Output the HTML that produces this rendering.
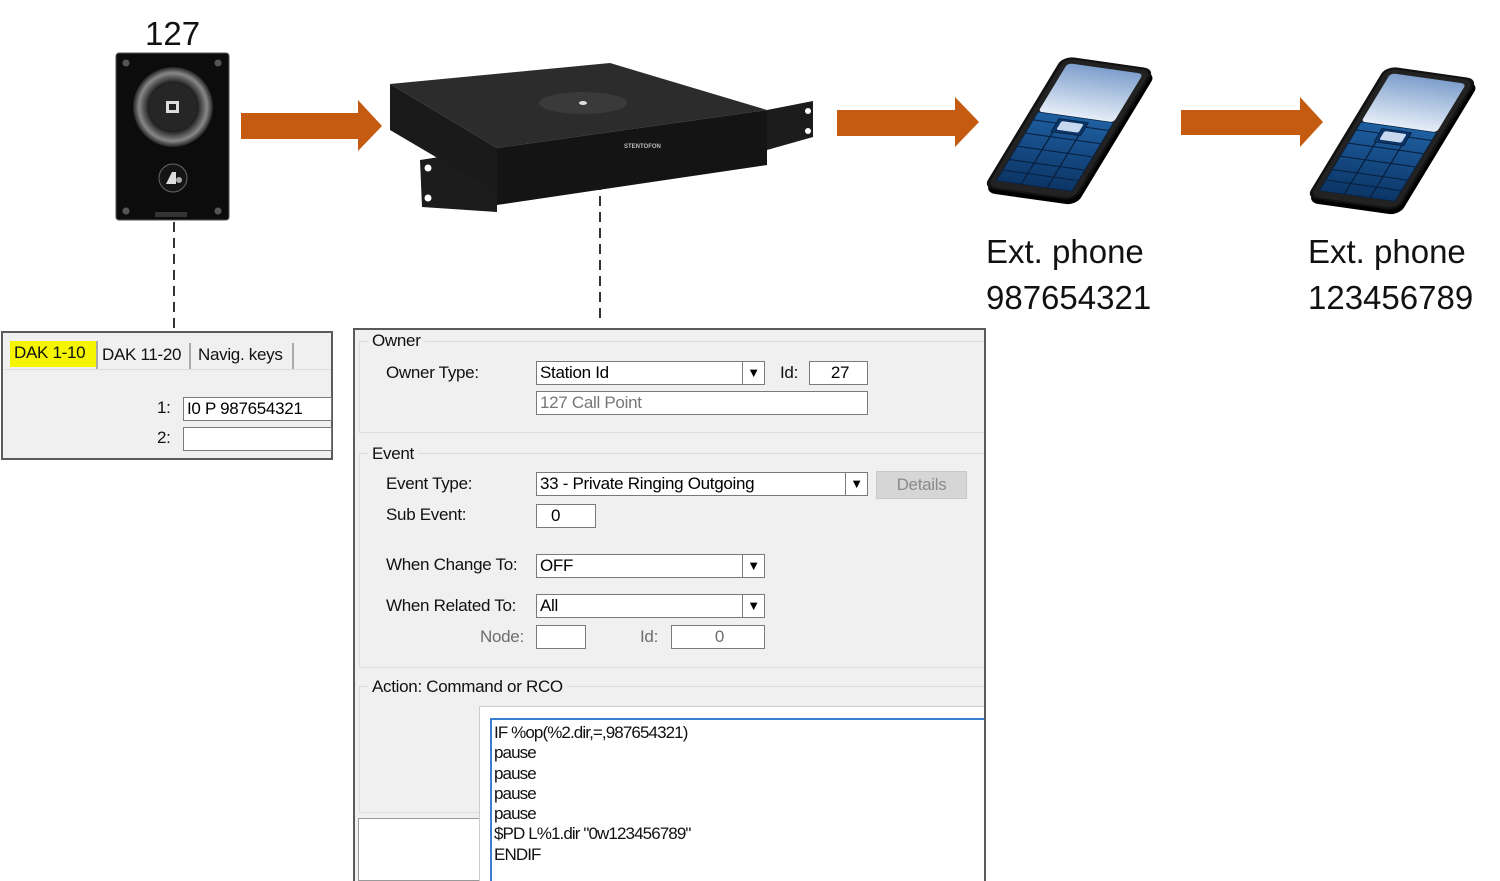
<!DOCTYPE html>
<html><head><meta charset="utf-8"><style>
*{margin:0;padding:0;box-sizing:border-box}
body{width:1500px;height:881px;background:#fff;position:relative;overflow:hidden;font-family:"Liberation Sans",sans-serif}
.a{position:absolute}
.ui{font-family:"Liberation Sans Narrow","Liberation Sans",sans-serif;font-size:17px;color:#111;white-space:nowrap;letter-spacing:-0.3px}
.inp{position:absolute;background:#fff;border:1px solid #7a7a7a;height:24px;font-size:17px;line-height:22px;padding-left:3px;white-space:nowrap;font-family:"Liberation Sans Narrow","Liberation Sans",sans-serif;letter-spacing:-0.3px}
.dd{position:absolute;right:0;top:0;width:22px;height:22px;border-left:1px solid #7a7a7a;text-align:center;font-size:13px;line-height:22px}
.grp{position:absolute;border:1px solid #dcdcdc;border-right:none}
.big{font-family:"Liberation Sans",sans-serif;font-size:33px;color:#111;line-height:1}
</style></head><body>

<div class="a big" style="left:145px;top:17px;font-size:33px">127</div>

<svg class="a" style="left:0;top:0" width="1500" height="330">
  <defs>
    <radialGradient id="sp" cx="50%" cy="50%" r="50%">
      <stop offset="0" stop-color="#333"/><stop offset="0.6" stop-color="#1a1a1a"/><stop offset="0.85" stop-color="#888"/><stop offset="1" stop-color="#222"/>
    </radialGradient>
    <linearGradient id="scr" x1="0" y1="0" x2="0" y2="1"><stop offset="0" stop-color="#7e9fcc"/><stop offset="1" stop-color="#e6eef8"/></linearGradient>
    <linearGradient id="kp" x1="0" y1="0" x2="0" y2="1"><stop offset="0" stop-color="#1f5fa0"/><stop offset="1" stop-color="#0b3566"/></linearGradient>
    <g id="phone">
      <rect x="4" y="6" width="100" height="200" rx="12" fill="#000"/>
      <rect x="0" y="0" width="100" height="200" rx="12" fill="#111"/>
      <rect x="3" y="3" width="94" height="194" rx="10" fill="#222"/>
      <rect x="9" y="9" width="82" height="74" rx="5" fill="url(#scr)"/>
      <rect x="9" y="83" width="82" height="104" fill="url(#kp)" stroke="#08203f"/>
      <g stroke="#08203f" stroke-width="1.5">
        <line x1="9" y1="95" x2="91" y2="95"/><line x1="9" y1="115" x2="91" y2="115"/><line x1="9" y1="135" x2="91" y2="135"/><line x1="9" y1="155" x2="91" y2="155"/><line x1="9" y1="171" x2="91" y2="171"/>
        <line x1="36" y1="95" x2="36" y2="187"/><line x1="64" y1="95" x2="64" y2="187"/>
      </g>
      <rect x="34" y="88" width="32" height="20" fill="#0b3566" stroke="#08203f"/>
      <rect x="38" y="91" width="24" height="13" rx="2" fill="#c8d8ee"/>
    </g>
  </defs>

  <rect x="116" y="53" width="113" height="167" rx="3" fill="#0c0c0c" stroke="#555"/>
  <circle cx="126" cy="63" r="3.5" fill="#555"/><circle cx="218" cy="63" r="3.5" fill="#555"/>
  <circle cx="126" cy="211" r="3.5" fill="#555"/><circle cx="218" cy="211" r="3.5" fill="#555"/>
  <circle cx="173" cy="107" r="40" fill="url(#sp)"/>
  <circle cx="173" cy="107" r="24" fill="#262626"/>
  <rect x="166" y="101" width="13" height="12" fill="#ddd"/><rect x="169" y="104" width="7" height="6" fill="#222"/>
  <circle cx="173" cy="178" r="14" fill="#151515" stroke="#666"/>
  <path d="M166 184 L172 172 L176 172 L176 184 Z" fill="#ddd"/><circle cx="179" cy="180" r="3" fill="#aaa"/>
  <rect x="155" y="212" width="32" height="5" fill="#333"/>

  <line x1="174" y1="222" x2="174" y2="331" stroke="#333" stroke-width="2" stroke-dasharray="10,6"/>
  <line x1="600" y1="180" x2="600" y2="322" stroke="#333" stroke-width="2" stroke-dasharray="10,6"/>

  <polygon points="241,113 358,113 358,100 382,126 358,151 358,139 241,139" fill="#c55a11"/>
  <polygon points="837,110 955,110 955,97 979,122 955,147 955,136 837,136" fill="#c55a11"/>
  <polygon points="1181,110 1300,110 1300,97 1323,122 1300,147 1300,135 1181,135" fill="#c55a11"/>

  <polygon points="420,160 497,148 497,212 422,207" fill="#1c1c1c"/>
  <circle cx="428" cy="168" r="3.5" fill="#fff"/><circle cx="428" cy="198" r="3.5" fill="#fff"/>
  <polygon points="390,84 610,63 767,110 497,148" fill="#2c2c2c"/>
  <polygon points="390,84 497,148 497,193 390,130" fill="#1a1a1a"/>
  <polygon points="497,148 767,110 767,165 497,205" fill="#141414"/>
  <polygon points="767,110 813,101 813,137 767,150" fill="#1c1c1c"/>
  <circle cx="808" cy="111" r="3" fill="#fff"/><circle cx="808" cy="131" r="3" fill="#fff"/>
  <ellipse cx="583" cy="103" rx="44" ry="11" fill="#3a3a3a"/>
  <ellipse cx="583" cy="103" rx="4" ry="2" fill="#ddd"/>
  <text x="624" y="148" font-size="6" fill="#bbb" font-family="Liberation Sans" font-weight="bold">STENTOFON</text>

  <g transform="matrix(0.92,0.13,-0.4,0.66,1063,56)"><use href="#phone"/></g>
  <g transform="matrix(0.92,0.13,-0.4,0.66,1386,66)"><use href="#phone"/></g>
</svg>

<div class="a big" style="left:986px;top:235px">Ext. phone</div>
<div class="a big" style="left:986px;top:281px">987654321</div>
<div class="a big" style="left:1308px;top:235px">Ext. phone</div>
<div class="a big" style="left:1308px;top:281px">123456789</div>

<div class="a" style="left:1px;top:331px;width:332px;height:129px;background:#f0f0f0;border:2px solid #5a5a5a;border-right:none"></div>
<div class="a" style="left:331px;top:331px;width:2px;height:129px;background:#5a5a5a"></div>
<div class="a" style="left:5px;top:369px;width:326px;height:1px;background:#dcdcdc"></div>
<div class="a ui" style="left:10px;top:341px;width:86px;height:26px;background:#f5f500;padding:2px 0 0 4px;font-size:17px">DAK 1-10</div>
<div class="a" style="left:96px;top:341px;width:2px;height:28px;background:#aaa"></div>
<div class="a ui" style="left:102px;top:345px">DAK 11-20</div>
<div class="a" style="left:189px;top:343px;width:2px;height:26px;background:#aaa"></div>
<div class="a ui" style="left:198px;top:345px">Navig. keys</div>
<div class="a" style="left:292px;top:343px;width:2px;height:26px;background:#aaa"></div>
<div class="a ui" style="left:157px;top:398px">1:</div>
<div class="a ui" style="left:157px;top:428px">2:</div>
<div class="inp" style="left:183px;top:397px;width:149px">I0 P 987654321</div>
<div class="inp" style="left:183px;top:427px;width:149px"></div>

<div class="a" style="left:353px;top:328px;width:633px;height:553px;background:#f0f0f0;border:2px solid #5a5a5a;border-bottom:none"></div>
<div class="grp" style="left:359px;top:341px;width:625px;height:92px"></div>
<div class="a ui" style="left:368px;top:331px;background:#f0f0f0;padding:0 4px">Owner</div>
<div class="a ui" style="left:386px;top:363px">Owner Type:</div>
<div class="inp" style="left:536px;top:361px;width:229px">Station Id<div class="dd">▼</div></div>
<div class="a ui" style="left:780px;top:363px">Id:</div>
<div class="inp" style="left:809px;top:361px;width:59px;text-align:center">27</div>
<div class="inp" style="left:536px;top:391px;width:332px;color:#777">127 Call Point</div>

<div class="grp" style="left:359px;top:453px;width:625px;height:215px"></div>
<div class="a ui" style="left:368px;top:444px;background:#f0f0f0;padding:0 4px">Event</div>
<div class="a ui" style="left:386px;top:474px">Event Type:</div>
<div class="inp" style="left:536px;top:472px;width:332px">33 - Private Ringing Outgoing<div class="dd">▼</div></div>
<div class="a ui" style="left:876px;top:471px;width:91px;height:28px;background:#d6d6d6;border:1px solid #c8c8c8;color:#8a8a8a;text-align:center;line-height:26px">Details</div>
<div class="a ui" style="left:386px;top:505px">Sub Event:</div>
<div class="inp" style="left:536px;top:504px;width:60px;padding-left:14px">0</div>
<div class="a ui" style="left:386px;top:555px">When Change To:</div>
<div class="inp" style="left:536px;top:554px;width:229px">OFF<div class="dd">▼</div></div>
<div class="a ui" style="left:386px;top:596px">When Related To:</div>
<div class="inp" style="left:536px;top:594px;width:229px">All<div class="dd">▼</div></div>
<div class="a ui" style="left:480px;top:627px;color:#6d6d6d">Node:</div>
<div class="inp" style="left:536px;top:625px;width:50px"></div>
<div class="a ui" style="left:640px;top:627px;color:#6d6d6d">Id:</div>
<div class="inp" style="left:671px;top:625px;width:94px;text-align:center;color:#6d6d6d">0</div>

<div class="grp" style="left:359px;top:686px;width:625px;height:127px"></div>
<div class="a ui" style="left:368px;top:677px;background:#f0f0f0;padding:0 4px">Action: Command or RCO</div>
<div class="a" style="left:358px;top:818px;width:122px;height:63px;background:#fff;border:1px solid #999"></div>
<div class="a" style="left:479px;top:706px;width:505px;height:175px;background:#fff;border-left:1px solid #ccc;border-top:1px solid #ccc"></div>
<div class="a" style="left:490px;top:718px;width:494px;height:163px;border-left:2px solid #3b7fd1;border-top:2px solid #3b7fd1"></div>
<div class="a" style="left:494px;top:723px;font-family:'Liberation Sans',sans-serif;font-size:17px;line-height:20.3px;color:#111;letter-spacing:-0.9px;white-space:pre">IF %op(%2.dir,=,987654321)
pause
pause
pause
pause
$PD L%1.dir "0w123456789"
ENDIF</div>

</body></html>
